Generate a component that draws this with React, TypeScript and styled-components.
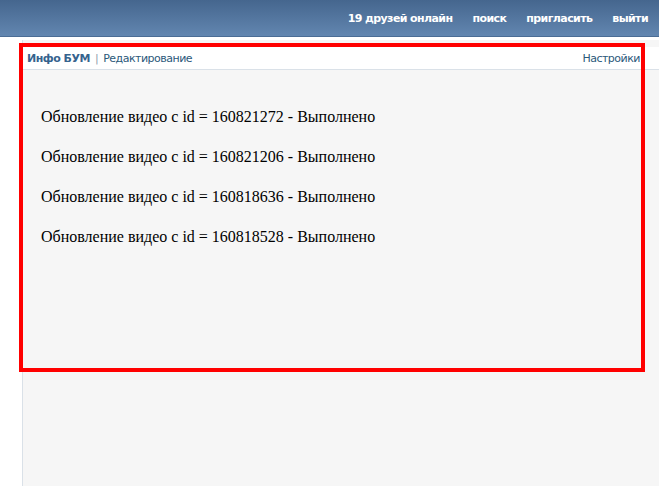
import React from "react";
import styled, { createGlobalStyle } from "styled-components";

const Global = createGlobalStyle`
  html, body { margin: 0; padding: 0; background: #fff; overflow: hidden; }
  body { width: 659px; height: 486px; position: relative; }
`;

const TopBar = styled.div`
  height: 37px;
  background: linear-gradient(#45668e, #6286b0);
  border-bottom: 1px solid #4b6d95;
  display: flex;
  justify-content: flex-end;
  align-items: center;
  gap: 20px;
  padding-right: 11px;
  box-sizing: border-box;
`;

const NavLink = styled.span`
  color: #fff;
  font: bold 11px "DejaVu Sans", sans-serif;
  letter-spacing: -0.6px;
`;

const Page = styled.div`
  padding: 3px 0 0 22px;
`;

const Panel = styled.div`
  border-left: 1px solid #dae1e8;
  background: #f6f6f6;
  height: 446px;
  padding-top: 7px;
`;

const Tabs = styled.div`
  height: 22px;
  background: #fff;
  border-bottom: 1px solid #dae1e8;
  display: flex;
  align-items: center;
  padding: 0 19px 0 4px;
  font: 11px "DejaVu Sans", sans-serif;
  letter-spacing: -0.5px;
  color: #2b587a;
`;

const Tab = styled.span<{ $active?: boolean }>`
  font-weight: ${(p) => (p.$active ? "bold" : "normal")};
  color: ${(p) => (p.$active ? "#36638e" : "#2b587a")};
`;

const Sep = styled.span`
  color: #8c9bab;
  margin: 0 5px;
`;

const Spacer = styled.div` flex: 1; `;

const Log = styled.div`
  padding: 37px 0 0 18px;
  display: flex;
  flex-direction: column;
  gap: 21px;
`;

const Line = styled.div`
  font: 16px "Liberation Serif", serif;
  color: #000;
  line-height: 19px;
`;

const Highlight = styled.div`
  position: absolute;
  left: 19px;
  top: 43px;
  width: 626px;
  height: 329px;
  border: 4px solid #ff0000;
  box-sizing: border-box;
  pointer-events: none;
`;

const ids = ["160821272", "160821206", "160818636", "160818528"];

export default function App() {
  return (
    <>
      <Global />
      <TopBar>
        <NavLink>19 друзей онлайн</NavLink>
        <NavLink>поиск</NavLink>
        <NavLink>пригласить</NavLink>
        <NavLink>выйти</NavLink>
      </TopBar>
      <Page>
        <Panel>
          <Tabs>
            <Tab $active>Инфо БУМ</Tab>
            <Sep>|</Sep>
            <Tab>Редактирование</Tab>
            <Spacer />
            <Tab>Настройки</Tab>
          </Tabs>
          <Log>
            {ids.map((id) => (
              <Line key={id}>Обновление видео с id = {id} - Выполнено</Line>
            ))}
          </Log>
        </Panel>
      </Page>
      <Highlight />
    </>
  );
}
